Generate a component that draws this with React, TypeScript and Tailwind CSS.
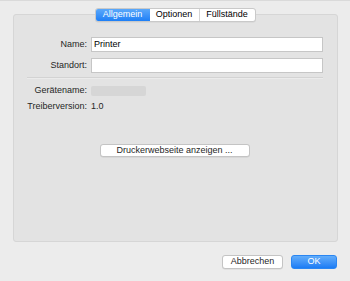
import React from "react";

const font = { fontFamily: '"Liberation Sans", Arial, sans-serif' };

export default function App() {
  return (
    <div
      style={font}
      className="w-[350px] h-[281px] bg-[#ececec] border-t border-[#dadada] flex flex-col text-[9px] text-[#262626] overflow-hidden"
    >
      <div className="relative ml-[13px] mt-[13px] w-[325px] h-[228px] bg-[#e3e3e3] border border-[#d6d6d6] rounded-[3px] flex flex-col">
        <div className="absolute left-0 right-0 -top-[7px] flex justify-center">
          <div className="flex h-[14px] rounded-[3px] border border-[#c9c9c9] bg-white overflow-hidden shadow-[0_0.5px_0.5px_rgba(0,0,0,0.08)] ml-[-1px]">
            <div className="w-[54px] flex items-center justify-center text-white bg-gradient-to-b from-[#5aa8fa] to-[#1c7ff6]">
              Allgemein
            </div>
            <div className="w-[50px] flex items-center justify-center border-r border-[#d4d4d4] text-black">
              Optionen
            </div>
            <div className="w-[55px] flex items-center justify-center text-black">
              Füllstände
            </div>
          </div>
        </div>

        <div className="pt-[22px] pl-[13px] pr-[14px] flex flex-col">
          <div className="flex items-center gap-[4px] h-[15px]">
            <div className="w-[60px] text-right">Name:</div>
            <div className="w-[232px] h-[15px] bg-white border border-[#c6c6c6] flex items-center pl-[2px] text-black">
              Printer
            </div>
          </div>
          <div className="flex items-center gap-[4px] h-[15px] mt-[6px]">
            <div className="w-[60px] text-right">Standort:</div>
            <div className="w-[232px] h-[15px] bg-white border border-[#c6c6c6]" />
          </div>
          <div className="mt-[4px] h-[1px] w-[296px] bg-[#d3d3d3] border-b border-[#ebebeb] box-content" />
          <div className="flex items-center gap-[4px] h-[11px] mt-[6px]">
            <div className="w-[60px] text-right">Gerätename:</div>
            <div className="w-[55px] h-[10px] bg-[#d6d6d6] rounded-[2px] blur-[0.6px]" />
          </div>
          <div className="flex items-center gap-[4px] h-[11px] mt-[5px]">
            <div className="w-[60px] text-right">Treiberversion:</div>
            <div>1.0</div>
          </div>
          <div className="flex justify-center mt-[32px] pr-[1px]">
            <div className="w-[150px] h-[13px] bg-white border border-[#c4c4c4] rounded-[3px] flex items-center justify-center shadow-[0_0.5px_0.5px_rgba(0,0,0,0.1)]">
              Druckerwebseite anzeigen ...
            </div>
          </div>
        </div>
      </div>

      <div className="flex justify-end gap-[8px] mt-[13px] pr-[13px]">
        <div className="w-[61px] h-[14px] bg-white border border-[#c4c4c4] rounded-[3px] flex items-center justify-center shadow-[0_0.5px_0.5px_rgba(0,0,0,0.1)]">
          Abbrechen
        </div>
        <div className="w-[46px] h-[14px] rounded-[3px] flex items-center justify-center text-white bg-gradient-to-b from-[#62adfa] to-[#1a7cf5] border border-[#2a86f2]">
          OK
        </div>
      </div>
    </div>
  );
}
